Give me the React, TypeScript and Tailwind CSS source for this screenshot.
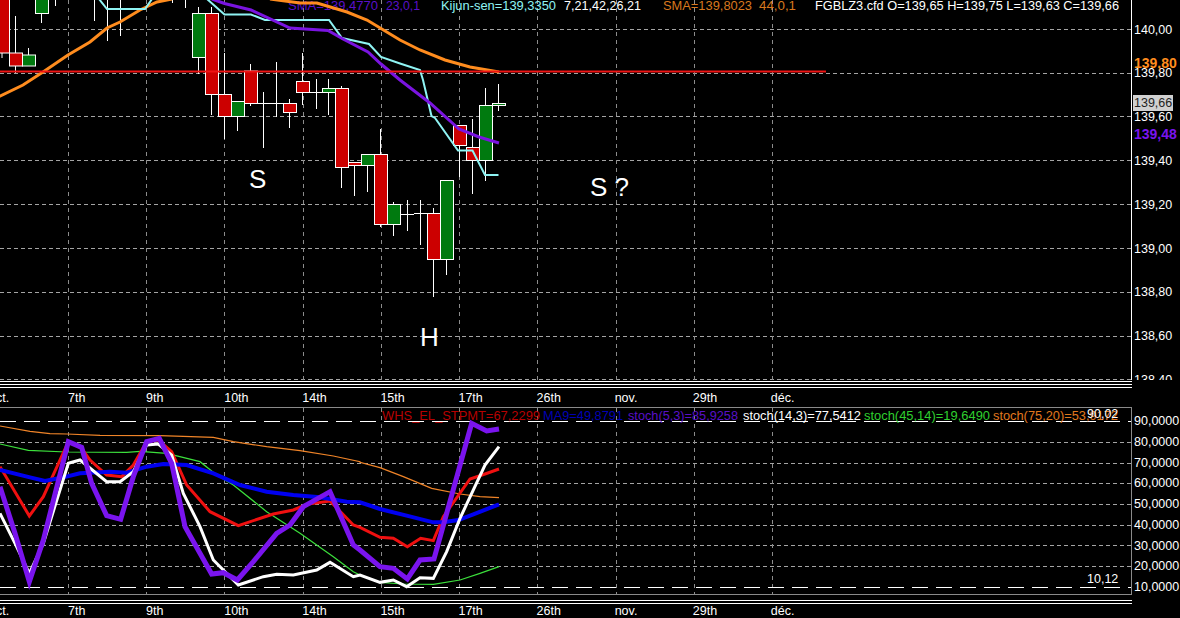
const RED = "#cc0000";
const GREEN = "#007a0f";

type Candle = { x: number; w: number; top: number; bot: number; hi: number; lo: number; fill: string };

// x = left edge of the body, w = body width, wick runs hi -> lo through the middle
const CANDLES: Candle[] = [
  { x: -4, w: 13.5, top: -10, bot: 53, hi: -10, lo: 58, fill: RED },
  { x: 9.5, w: 13, top: 53, bot: 66, hi: 16, lo: 73, fill: RED },
  { x: 22.5, w: 13, top: 55, bot: 66, hi: 48, lo: 66, fill: GREEN },
  { x: 35.5, w: 13, top: -10, bot: 13.5, hi: -10, lo: 23, fill: GREEN },
  { x: 192.5, w: 13, top: 13.5, bot: 57.5, hi: 7, lo: 74, fill: GREEN },
  { x: 205.5, w: 13, top: 13.5, bot: 94.5, hi: 7, lo: 115, fill: RED },
  { x: 218.5, w: 13, top: 94.5, bot: 116.5, hi: 53, lo: 139, fill: RED },
  { x: 231.5, w: 13, top: 101.5, bot: 116.5, hi: 101, lo: 131, fill: GREEN },
  { x: 244.5, w: 13, top: 71, bot: 103.5, hi: 64, lo: 106, fill: RED },
  { x: 283.5, w: 13, top: 103.5, bot: 112.5, hi: 99, lo: 128, fill: RED },
  { x: 296.5, w: 13, top: 81.5, bot: 92.5, hi: 53, lo: 105, fill: RED },
  { x: 322.5, w: 13, top: 88.5, bot: 92.5, hi: 79, lo: 115, fill: GREEN },
  { x: 335.5, w: 13, top: 88.5, bot: 167.5, hi: 86, lo: 188, fill: RED },
  { x: 348.5, w: 13, top: 162.5, bot: 165.5, hi: 162, lo: 196, fill: RED },
  { x: 361.5, w: 13, top: 154.5, bot: 165.5, hi: 154, lo: 192, fill: GREEN },
  { x: 374.5, w: 13, top: 154.5, bot: 224.5, hi: 129, lo: 227, fill: RED },
  { x: 387.5, w: 13, top: 204.5, bot: 224.5, hi: 202, lo: 236, fill: GREEN },
  { x: 427.5, w: 13, top: 213.5, bot: 259.5, hi: 208, lo: 297, fill: RED },
  { x: 440.5, w: 13, top: 180.5, bot: 259.5, hi: 180, lo: 275, fill: GREEN },
  { x: 453.5, w: 13, top: 125.5, bot: 145.5, hi: 125, lo: 177, fill: RED },
  { x: 466.5, w: 13, top: 147.5, bot: 160.5, hi: 119, lo: 194, fill: RED },
  { x: 479.5, w: 13, top: 105.5, bot: 160.5, hi: 88, lo: 181, fill: GREEN },
  { x: 492.5, w: 13, top: 103.5, bot: 105.5, hi: 84, lo: 111, fill: GREEN },
];

// sessions with no visible body: x, hi, lo, and y of the flat open/close tick (if any)
const DOJIS = [
  { x: 55.5, hi: -5, lo: 6 },
  { x: 94.5, hi: -5, lo: 21 },
  { x: 107.5, hi: -5, lo: 41 },
  { x: 120.5, hi: -5, lo: 36 },
  { x: 172.5, hi: -5, lo: 3 },
  { x: 185.5, hi: -5, lo: 8 },
  { x: 263.5, hi: 92, lo: 148, tick: 103.5 },
  { x: 276.5, hi: 62, lo: 117, tick: 103.5 },
  { x: 316.5, hi: 79, lo: 109, tick: 92.5 },
  { x: 407.5, hi: 200, lo: 231, tick: 214.5 },
  { x: 420.5, hi: 200, lo: 245, tick: 213.5 },
];

const poly = (pts: number[][]) => pts.map((p) => p.join(",")).join(" ");

const CYAN_A = [[99, -1], [107, 9], [145, 9], [152, -1]];
const CYAN_B = [[207, -1], [224.5, 14.5], [251, 14.5], [265, 20], [329, 20], [342, 38], [369, 44], [381, 57], [400, 63.5], [420, 70], [423, 80], [431.5, 116], [435, 118], [458, 150.5], [472.5, 150.5], [485, 175], [498.5, 175]];
const PURPLE = [[212, -1], [224.5, 3.5], [251, 10], [290, 28], [328, 30.5], [343, 39], [368, 52], [381, 64], [400, 80], [430, 103], [459, 129], [479, 137], [499, 143]];
const ORANGE_A = [[-2, 97], [23, 85], [43, 72], [68, 55], [90, 42], [107, 28], [120, 22], [140, 10], [157, 2], [172, -1]];
const ORANGE_B = [[270, -1], [300, 3], [317, 3], [347, 12], [367, 20], [400, 40], [420, 50], [445, 60], [470, 67], [499, 72]];

// indicator series read off in crop coordinates, converted to page coordinates
const left = (raw: number[][]) => raw.map(([x, y]) => [x / 3, y / 3 + 370]);
const right = (raw: number[][]) => raw.map(([x, y]) => [x / 3 + 360, y / 3 + 395]);

const IND = [
  {
    color: "#f08428", width: 1.2,
    pts: [...left([[0, 168], [90, 184], [150, 191], [200, 192], [300, 196], [480, 197], [550, 199], [640, 202], [700, 215], [800, 230], [900, 242], [1000, 258], [1080, 275]]), ...right([[0, 202], [60, 218], [130, 245], [215, 280], [300, 297], [360, 305], [417, 308]])],
  },
  {
    color: "#3ce03c", width: 1.2,
    pts: [...left([[0, 222], [85, 241], [200, 246], [380, 247], [420, 244], [500, 250], [600, 275], [650, 315], [700, 345], [800, 425], [900, 490], [1000, 560], [1060, 605]]), ...right([[0, 540], [60, 562], [130, 567], [220, 568], [300, 555], [360, 535], [417, 515]])],
  },
  {
    color: "#f01010", width: 3,
    pts: [...left([[0, 290], [88, 438], [130, 380], [205, 215], [245, 235], [270, 270], [320, 315], [365, 320], [400, 285], [440, 215], [475, 210], [515, 245], [560, 345], [630, 425], [715, 467], [820, 432], [880, 420], [920, 403], [990, 393], [1060, 465]]), ...right([[0, 397], [60, 427], [100, 430], [142, 455], [182, 430], [220, 437], [250, 365], [330, 252], [375, 237], [417, 222]])],
  },
  {
    color: "#0000f0", width: 4,
    pts: [...left([[0, 300], [90, 322], [135, 333], [190, 322], [240, 310], [330, 305], [380, 308], [440, 290], [490, 282], [560, 285], [640, 310], [720, 345], [800, 365], [880, 375], [960, 382], [1040, 395]]), ...right([[0, 322], [60, 342], [140, 362], [220, 382], [250, 382], [295, 375], [340, 358], [417, 328]])],
  },
  {
    color: "#ffffff", width: 3,
    pts: [...left([[0, 430], [45, 520], [88, 610], [130, 520], [205, 280], [240, 270], [320, 335], [360, 335], [400, 305], [440, 225], [475, 222], [515, 255], [550, 370], [600, 470], [640, 570], [715, 645], [790, 620], [830, 613], [880, 615], [950, 600], [990, 577], [1060, 620]]), ...right([[0, 540], [60, 562], [100, 555], [140, 575], [180, 548], [220, 550], [260, 470], [300, 370], [375, 210], [417, 155]])],
  },
  {
    color: "#7a14ee", width: 5,
    pts: [...left([[0, 350], [45, 490], [88, 635], [130, 510], [205, 215], [245, 232], [275, 340], [320, 437], [362, 448], [400, 320], [440, 215], [478, 205], [515, 280], [555, 470], [635, 612], [670, 608], [712, 630], [760, 575], [830, 490], [870, 465], [910, 410], [990, 365], [1060, 525]]), ...right([[0, 465], [60, 515], [100, 520], [142, 552], [180, 495], [222, 492], [335, 85], [380, 108], [417, 102]])],
  },
];

const GRID_X = [68.5, 146.5, 224.5, 303.5, 381.5, 459.5, 537.5, 616.5, 694.5, 772.5];
const PRICE_Y = [29.5, 73.5, 116.5, 160.5, 204.5, 248.5, 292.5, 336.5, 379.5];
const OSC_Y = [442.5, 463.5, 483.5, 504.5, 525.5, 545.5, 566.5];

const PRICES = ["140,00", "139,80", "139,60", "139,40", "139,20", "139,00", "138,80", "138,60", "138,40"];
const OSC = ["90,0000", "80,0000", "70,0000", "60,0000", "50,0000", "40,0000", "30,0000", "20,0000", "10,0000"];
const DATES = ["7th", "9th", "10th", "14th", "15th", "17th", "26th", "nov.", "29th", "déc."];

const HEADER = [
  { x: 288, len: 90, text: "SMA=139,4770", color: "#5a10c8" },
  { x: 386, len: 34, text: "23,0,1", color: "#5a10c8" },
  { x: 441, len: 115, text: "Kijun-sen=139,3350", color: "#8ff4f4" },
  { x: 564, len: 77, text: "7,21,42,26,21", color: "#ffffff" },
  { x: 663, len: 89, text: "SMA=139,8023", color: "#d8781e" },
  { x: 759, len: 37, text: "44,0,1", color: "#d8781e" },
  { x: 815, len: 304, text: "FGBLZ3.cfd O=139,65 H=139,75 L=139,63 C=139,66", color: "#ffffff" },
];

const LEGEND = [
  { x: 382, len: 158, text: "WHS_EL_STPMT=67,2299", color: "#b80000" },
  { x: 543, len: 80, text: "MA9=49,8791", color: "#0000b4" },
  { x: 628, len: 110, text: "stoch(5,3)=85,9258", color: "#5a10c8" },
  { x: 743, len: 118, text: "stoch(14,3)=77,5412", color: "#ffffff" },
  { x: 864, len: 126, text: "stoch(45,14)=19,6490", color: "#2fd02f" },
  { x: 993, len: 125, text: "stoch(75,20)=53,9172", color: "#e0781e" },
];

function DateRow() {
  return (
    <>
      <span className="ml-[-11px] w-[79px] shrink-0">oct.</span>
      {DATES.map((d) => (
        <span key={d} className="w-[78.1px] shrink-0">{d}</span>
      ))}
    </>
  );
}

function PriceChart() {
  return (
    <svg className="block w-[1131px] h-[380px] shrink-0" viewBox="0 0 1131 380" fontFamily="'Liberation Sans', Arial, sans-serif" fontSize="12.5">
      {PRICE_Y.map((y) => (
        <line key={y} x1="0" x2="1131" y1={y} y2={y} stroke="#a4a4a4" strokeDasharray="4 3" />
      ))}
      {GRID_X.map((x) => (
        <line key={x} x1={x} x2={x} y1="0" y2="380" stroke="#8c8c8c" strokeDasharray="4 4" />
      ))}

      {HEADER.map((h) => (
        <text key={h.text} x={h.x} y="10" fill={h.color} textLength={h.len} lengthAdjust="spacingAndGlyphs">{h.text}</text>
      ))}

      {DOJIS.map((d) => (
        <g key={d.x} stroke="#ffffff">
          <line x1={d.x} x2={d.x} y1={d.hi} y2={d.lo} />
          {d.tick !== undefined && <line x1={d.x - 6.5} x2={d.x + 6.5} y1={d.tick} y2={d.tick} />}
        </g>
      ))}
      {CANDLES.map((c) => (
        <g key={c.x}>
          <line x1={c.x + 6} x2={c.x + 6} y1={c.hi} y2={c.lo} stroke="#ffffff" />
          <rect x={c.x} y={c.top} width={c.w} height={c.bot - c.top} fill={c.fill} stroke="#ffffff" />
        </g>
      ))}

      <polyline points={poly(ORANGE_A)} fill="none" stroke="#ff8c1e" strokeWidth="3" />
      <polyline points={poly(ORANGE_B)} fill="none" stroke="#ff8c1e" strokeWidth="3" />
      <polyline points={poly(CYAN_A)} fill="none" stroke="#8ff4f4" strokeWidth="2" />
      <polyline points={poly(CYAN_B)} fill="none" stroke="#8ff4f4" strokeWidth="2" />
      <polyline points={poly(PURPLE)} fill="none" stroke="#7a14e0" strokeWidth="3" />

      <line x1="0" x2="826" y1="71.5" y2="71.5" stroke="#f01414" strokeWidth="2" />

      <text x="249" y="188" fontSize="26" fill="#ffffff">S</text>
      <text x="590" y="196" fontSize="26" fill="#ffffff">S ?</text>
      <text x="420" y="346" fontSize="26" fill="#ffffff">H</text>
    </svg>
  );
}

function Oscillator() {
  return (
    <svg className="block w-[1131px] h-[186px] shrink-0" viewBox="0 408 1131 186" fontFamily="'Liberation Sans', Arial, sans-serif" fontSize="12.5">
      {OSC_Y.map((y) => (
        <line key={y} x1="0" x2="1131" y1={y} y2={y} stroke="#a4a4a4" strokeDasharray="4 3" />
      ))}
      {GRID_X.map((x) => (
        <line key={x} x1={x} x2={x} y1="408" y2="594" stroke="#8c8c8c" strokeDasharray="4 4" />
      ))}
      <line x1="0" x2="1131" y1="421.5" y2="421.5" stroke="#ffffff" strokeDasharray="16 8" />
      <line x1="0" x2="1131" y1="587.5" y2="587.5" stroke="#ffffff" strokeDasharray="16 8" />

      {IND.map((s) => (
        <polyline key={s.color} points={poly(s.pts)} fill="none" stroke={s.color} strokeWidth={s.width} />
      ))}

      {LEGEND.map((l) => (
        <text key={l.text} x={l.x} y="420" fill={l.color} textLength={l.len} lengthAdjust="spacingAndGlyphs">{l.text}</text>
      ))}
      <text x="1087" y="418" fill="#ffffff">90,02</text>
      <text x="1087" y="583" fill="#ffffff">10,12</text>
    </svg>
  );
}

export default function App() {
  return (
    <div className="w-[1180px] h-[618px] bg-black text-white overflow-hidden flex flex-col font-['Liberation_Sans',Arial,sans-serif] text-[12.5px]">
      {/* price pane */}
      <div className="flex h-[380px] shrink-0">
        <PriceChart />
        <div className="relative flex-1 border-l border-white overflow-hidden pl-[2px] pt-[8px]">
          {PRICES.map((p) => (
            <div key={p} className="flex h-[43.8px] items-center shrink-0">{p}</div>
          ))}
          <span className="absolute left-[2px] top-[53px] font-bold text-[#ff8c1e] text-[14px]">139,80</span>
          <span className="absolute left-[1px] top-[95px] w-[40px] h-[16px] pl-[1px] bg-[#d0d0d0] text-[#222222] leading-[16px]">139,66</span>
          <span className="absolute left-[2px] top-[124px] font-bold text-[#7a14ee] text-[14px]">139,48</span>
        </div>
      </div>

      {/* triple rule under the price pane */}
      <div className="mt-[1px] h-[1px] w-[1132px] bg-white shrink-0" />
      <div className="mt-[2px] h-[1px] w-[1132px] bg-white shrink-0" />
      <div className="mt-[2px] h-[1px] w-[1132px] bg-white shrink-0" />

      <div className="flex h-[19px] pt-[2px] items-center shrink-0">
        <DateRow />
      </div>

      {/* oscillator pane */}
      <div className="flex h-[188px] shrink-0">
        <div className="border-y border-[#8a8a8a] h-[188px] shrink-0">
          <Oscillator />
        </div>
        <div className="flex-1 border-l border-[#8a8a8a] pl-[2px] pt-[4px]">
          {OSC.map((v) => (
            <div key={v} className="flex h-[20.75px] items-center">{v}</div>
          ))}
        </div>
      </div>

      <div className="mt-[5px] h-[1px] w-[1132px] bg-white shrink-0" />
      <div className="mt-[2px] h-[1px] w-[1132px] bg-white shrink-0" />

      <div className="flex h-[14px] items-center shrink-0">
        <DateRow />
      </div>
    </div>
  );
}
